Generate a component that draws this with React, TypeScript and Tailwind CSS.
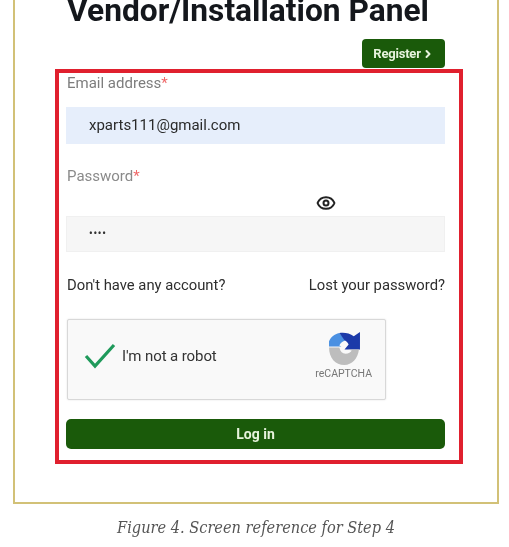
import { ChevronRight, Eye } from "lucide-react";

function RecaptchaLogo() {
  return (
    <svg className="ml-[2px]" width="31" height="33" viewBox="0 0 30 32" fill="none">
      <path d="M0 14V9c2-4 5-7 10-8l6 7-2 1c-2 1-3 2-4 4l2 1z" fill="#4a90e2" />
      <path d="M10 1c4-1 10 0 14 3l6-4v17H15l4-5c-1-2-2-3-4-4z" fill="#1c3aa9" />
      <path d="M0 15h10c1 4 3 6 6 6s5-1 6-3l-4-1h11c-1 9-7 15-14 15C6 32 0 25 0 15z" fill="#bdbdbd" />
    </svg>
  );
}

export default function App() {
  return (
    <div className="h-[547px] w-[509px] overflow-hidden bg-white font-['Roboto',sans-serif] blur-[0.4px]">
      <div className="mt-[-16px] ml-[13px] h-[520px] w-[486px] border-2 border-[#d2c177] pt-[3px]">
        <h1 className="mr-[16px] text-center text-[31.7px] leading-[44px] font-bold text-[#14171c]">
          Vendor/Installation Panel
        </h1>
        <div className="mt-[6px] mr-[52px] flex justify-end">
          <button
            type="button"
            className="flex h-[29px] w-[83px] items-center justify-center gap-[1px] rounded-[4px] bg-[#1a5a0a] text-[13px] font-bold tracking-[-0.2px] text-[#e6f3dc]"
          >
            Register
            <ChevronRight className="h-3 w-3" strokeWidth={4} />
          </button>
        </div>
        <div className="mt-px ml-[40px] h-[395px] w-[408px] border-4 border-[#e0202e] pr-[14px] pl-[7px]">
          <div className="pt-[1px] pl-px text-[15px] leading-[18px] text-[#7d7d7d]">
            Email address<span className="text-[#ef6a6a]">*</span>
          </div>
          <div className="mt-[15px] flex h-[37px] items-center bg-[#e6eefb] pl-[23px] text-[15px] text-[#2a2a2a]">
            xparts111@gmail.com
          </div>
          <div className="mt-[23px] pl-px text-[15px] leading-[18px] text-[#8a8a8a]">
            Password<span className="text-[#ef6a6a]">*</span>
          </div>
          <div className="mt-[8px] flex h-[20px] items-center pl-[250px]">
            <Eye className="h-[20px] w-[20px] text-[#222222]" strokeWidth={2.4} />
          </div>
          <div className="mt-[3px] flex h-[36px] items-center border border-[#f0f0f0] bg-[#f6f6f6] pl-[22px] text-[10px] leading-none font-bold tracking-[0.8px] text-[#333333]">
            ••••
          </div>
          <div className="mt-[23px] flex justify-between pl-px text-[14.8px] leading-[20px] text-[#2e2e2e]">
            <span>Don't have any account?</span>
            <span>Lost your password?</span>
          </div>
          <div className="mt-[24px] ml-px flex h-[81px] w-[319px] rounded-[2px] border border-[#d8d8d8] bg-[#f9f9f9] shadow-[0_0_2px_rgba(0,0,0,0.12)]">
            <div className="mb-[7px] flex flex-1 items-center">
              <svg className="ml-[16px]" width="32" height="26" viewBox="0 0 32 26" fill="none">
                <path d="M2 13l9 10L30 2" stroke="#1f9a5b" strokeWidth="3.2" />
              </svg>
              <span className="ml-[6px] text-[15px] tracking-[-0.1px] text-[#333333]">I'm not a robot</span>
            </div>
            <div className="mr-[13px] flex flex-col items-center pt-[12px]">
              <RecaptchaLogo />
              <span className="mt-[3px] text-[10.5px] leading-3 text-[#777777]">reCAPTCHA</span>
            </div>
          </div>
          <button
            type="button"
            className="mt-[19px] flex h-[30px] w-full items-center justify-center rounded-[5px] bg-[#1a5a0a] text-[14px] font-bold text-[#e6f3dc]"
          >
            Log in
          </button>
        </div>
      </div>
      <p className="mt-[13px] ml-[3px] text-center font-['DejaVu_Serif_Condensed','DejaVu_Serif',serif] text-[16.2px] leading-[22px] text-[#555555] italic">
        Figure 4. Screen reference for Step 4
      </p>
    </div>
  );
}
